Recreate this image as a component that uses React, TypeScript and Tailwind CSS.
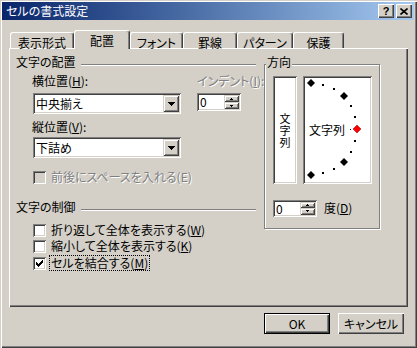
import type { ReactNode } from 'react'

const raised = 'bg-[#d4d0c8] shadow-[inset_1px_1px_#fff,inset_-1px_-1px_#404040,inset_-2px_-2px_#808080]'
const btn3d = 'bg-[#d4d0c8] shadow-[inset_1px_1px_#d4d0c8,inset_-1px_-1px_#404040,inset_2px_2px_#fff,inset_-2px_-2px_#808080]'
const sunken = 'shadow-[inset_1px_1px_#808080,inset_-1px_-1px_#fff,inset_2px_2px_#404040,inset_-2px_-2px_#d4d0c8]'
const etched = 'border border-[#808080] shadow-[inset_1px_1px_#fff,1px_1px_#fff]'
const disabledText = 'text-[#808080] [text-shadow:1px_1px_0_#fff]'

function Tri({ up = false, w = 7 }: { up?: boolean; w?: number }) {
  const rows = Math.ceil(w / 2)
  return (
    <svg width={w} height={rows} shapeRendering="crispEdges">
      {Array.from({ length: rows }).map((_, i) => {
        const r = up ? rows - 1 - i : i
        return <rect key={i} x={r} y={i} width={w - r * 2} height={1} fill="#000" />
      })}
    </svg>
  )
}

function Combo({ value }: { value: string }) {
  return (
    <div className={`w-[148px] h-[21px] flex items-center p-[2px] bg-white ${sunken}`}>
      <span className="flex-1 pl-[1px] leading-[16px]">{value}</span>
      <div className={`w-[16px] h-[17px] flex items-center justify-center ${btn3d}`}>
        <Tri />
      </div>
    </div>
  )
}

function Spin({ h = 18 }: { h?: number }) {
  return (
    <div className={`w-[44px] flex p-[2px] bg-white ${sunken} ${h === 18 ? 'h-[18px]' : 'h-[17px]'}`}>
      <span className="flex-1 pl-[1px] leading-[13px]">0</span>
      <div className="w-[15px] flex flex-col">
        <div className={`flex-1 flex items-center justify-center ${btn3d}`}>
          <Tri up w={3} />
        </div>
        <div className={`flex-1 flex items-center justify-center ${btn3d}`}>
          <Tri w={3} />
        </div>
      </div>
    </div>
  )
}

function Check({ label, checked, disabled, focus }: { label: ReactNode; checked?: boolean; disabled?: boolean; focus?: boolean }) {
  return (
    <div className="flex items-center h-[16px]">
      <div className={`w-[13px] h-[13px] flex items-center justify-center ${disabled ? 'bg-[#d4d0c8]' : 'bg-white'} ${sunken}`}>
        {checked && (
          <svg width="7" height="7" shapeRendering="crispEdges">
            <path d="M0 2h1v1h1v1h1v-1h1v-1h1v-1h1v-1h1v3h-1v1h-1v1h-1v1h-1v1h-1v-1h-1v-1h-1v-1h-1z" fill="#000" />
          </svg>
        )}
      </div>
      <span
        className={`ml-[3px] leading-[14px] whitespace-nowrap ${disabled ? disabledText : ''} ${
          focus ? 'border border-dotted border-black px-[1px]' : 'px-[2px]'
        }`}
      >
        {label}
      </span>
    </div>
  )
}

function GroupHeader({ title }: { title: string }) {
  return (
    <div className="flex items-start h-[14px]">
      <span className="leading-[14px] whitespace-nowrap">{title}</span>
      <div className="flex-1 ml-[5px] mt-[9px] h-[2px] border-t border-[#808080] border-b border-b-white" />
    </div>
  )
}

function Semicircle() {
  const cx = 8
  const cy = 53
  const r = 46
  const pts = [-90, -75, -60, -45, -30, -15, 0, 15, 30, 45, 60, 75, 90].map(a => ({
    a,
    x: Math.round(cx + r * Math.cos((a * Math.PI) / 180)),
    y: Math.round(cy + r * Math.sin((a * Math.PI) / 180)),
  }))
  return (
    <svg className="absolute left-0 top-0" width="69" height="108" shapeRendering="crispEdges">
      {pts.map(p =>
        p.a % 45 === 0 ? (
          <polygon
            key={p.a}
            points={`${p.x},${p.y - 4} ${p.x + 4},${p.y} ${p.x},${p.y + 4} ${p.x - 4},${p.y}`}
            fill={p.a === 0 ? '#ff0000' : '#000'}
            stroke={p.a === 0 ? '#800000' : 'none'}
            strokeWidth={0.5}
            shapeRendering="auto"
          />
        ) : (
          <rect key={p.a} x={p.x - 1} y={p.y - 1} width={2} height={2} fill="#000" />
        )
      )}
      <rect x={47} y={53} width={1} height={1} fill="#000" />
    </svg>
  )
}

const tabs = [
  { label: '表示形式', w: 'w-[64px]' },
  { label: '配置', w: 'w-[56px]', active: true },
  { label: 'フォント', w: 'w-[53px]' },
  { label: '罫線', w: 'w-[54px]' },
  { label: 'パターン', w: 'w-[56px]' },
  { label: '保護', w: 'w-[51px]' },
]

export default function App() {
  return (
    <div className="w-[417px] h-[348px] bg-[#d4d0c8] text-[12px] text-black font-['Noto_Sans_CJK_JP','Liberation_Sans',sans-serif] [font-feature-settings:'palt'] shadow-[inset_1px_1px_#d4d0c8,inset_2px_2px_#fff,inset_-1px_-1px_#404040,inset_-2px_-2px_#808080] overflow-hidden">
      {/* title bar */}
      <div className="ml-[2px] pt-[2px] w-[412px]">
        <div className="h-[18px] flex items-center bg-gradient-to-r from-[#0a246a] to-[#a6caf0]">
          <span className="pl-[4px] text-white leading-[18px] whitespace-nowrap">セルの書式設定</span>
          <div className="ml-auto mr-[2px] flex gap-[2px]">
            <div className={`w-[16px] h-[14px] flex items-center justify-center ${raised}`}>
              <span className="text-[11px] font-bold leading-[12px] font-['Liberation_Sans',sans-serif]">?</span>
            </div>
            <div className={`w-[16px] h-[14px] flex items-center justify-center ${raised}`}>
              <svg width="8" height="7" viewBox="0 0 8 7">
                <path d="M0.5 0.5L7.5 6.5M7.5 0.5L0.5 6.5" stroke="#000" strokeWidth="1.6" />
              </svg>
            </div>
          </div>
        </div>
      </div>

      {/* tabs */}
      <div className="mt-[10px] ml-[10px] h-[18px] flex items-end">
        {tabs.map(t => (
          <div
            key={t.label}
            className={`${t.w} bg-[#d4d0c8] border-t border-l border-white border-r border-r-[#404040] rounded-t-[3px] shadow-[inset_-1px_0_#808080] text-center whitespace-nowrap ${
              t.active ? 'relative z-10 h-[19px] -mb-[1px] pt-[1px]' : 'h-[16px] pt-[1px]'
            }`}
          >
            <span className="leading-[14px]">{t.label}</span>
          </div>
        ))}
      </div>

      {/* tab panel */}
      <div className="ml-[9px] w-[399px] h-[259px] pt-[7px] pl-[7px] flex items-start shadow-[inset_1px_1px_#fff,inset_-1px_-1px_#404040,inset_-2px_-2px_#808080]">
        <div className="w-[240px] flex flex-col">
          <GroupHeader title="文字の配置" />
          <div className="flex mt-[4px]">
            <div className="ml-[17px] flex flex-col">
              <span className="h-[16px] leading-[16px] -ml-[1px]">
                横位置(<u>H</u>):
              </span>
              <div className="mt-[4px]">
                <Combo value="中央揃え" />
              </div>
              <span className="mt-[5px] h-[16px] leading-[16px] -ml-[1px]">
                縦位置(<u>V</u>):
              </span>
              <div className="mt-[2px]">
                <Combo value="下詰め" />
              </div>
            </div>
            <div className="ml-[16px] flex flex-col">
              <span className={`h-[16px] leading-[16px] whitespace-nowrap ${disabledText}`}>
                インデント(<u>I</u>):
              </span>
              <div className="mt-[4px]">
                <Spin />
              </div>
            </div>
          </div>
          <div className="mt-[11px] ml-[17px]">
            <Check disabled label="前後にスペースを入れる(E)" />
          </div>
          <div className="mt-[15px]">
            <GroupHeader title="文字の制御" />
          </div>
          <div className="mt-[8px] ml-[17px] flex flex-col">
            <Check label={<>折り返して全体を表示する(<u>W</u>)</>} />
            <Check label={<>縮小して全体を表示する(<u>K</u>)</>} />
            <div className="mt-[1px]">
              <Check checked focus label={<>セルを結合する(<u>M</u>)</>} />
            </div>
          </div>
        </div>

        {/* 方向 */}
        <div className={`ml-[8px] mt-[9px] relative w-[116px] h-[165px] ${etched}`}>
          <span className="absolute left-[1px] -top-[10px] px-[1px] bg-[#d4d0c8] leading-[14px]">方向</span>
          <div className="flex mt-[11px] ml-[8px]">
            <div className={`w-[24px] h-[108px] bg-white flex items-center justify-center ${sunken}`}>
              <span className="w-[12px] leading-[12px] text-[11px] break-all text-center">文字列</span>
            </div>
            <div className={`ml-[6px] relative w-[69px] h-[108px] bg-white flex items-center pl-[6px] ${sunken}`}>
              <span className="leading-[14px] whitespace-nowrap">文字列</span>
              <Semicircle />
            </div>
          </div>
          <div className="flex items-center mt-[15px] ml-[8px]">
            <Spin h={17} />
            <span className="ml-[7px] whitespace-nowrap">
              度(<u>D</u>)
            </span>
          </div>
        </div>
      </div>

      {/* buttons */}
      <div className="mt-[6px] mr-[13px] flex justify-end gap-[8px]">
        <div className="w-[66px] h-[21px] border border-black">
          <div className={`w-full h-full flex items-center justify-center ${raised}`}>
            <span className="leading-[14px]">OK</span>
          </div>
        </div>
        <div className={`w-[66px] h-[21px] flex items-center justify-center ${raised}`}>
          <span className="leading-[14px]">キャンセル</span>
        </div>
      </div>
    </div>
  )
}
